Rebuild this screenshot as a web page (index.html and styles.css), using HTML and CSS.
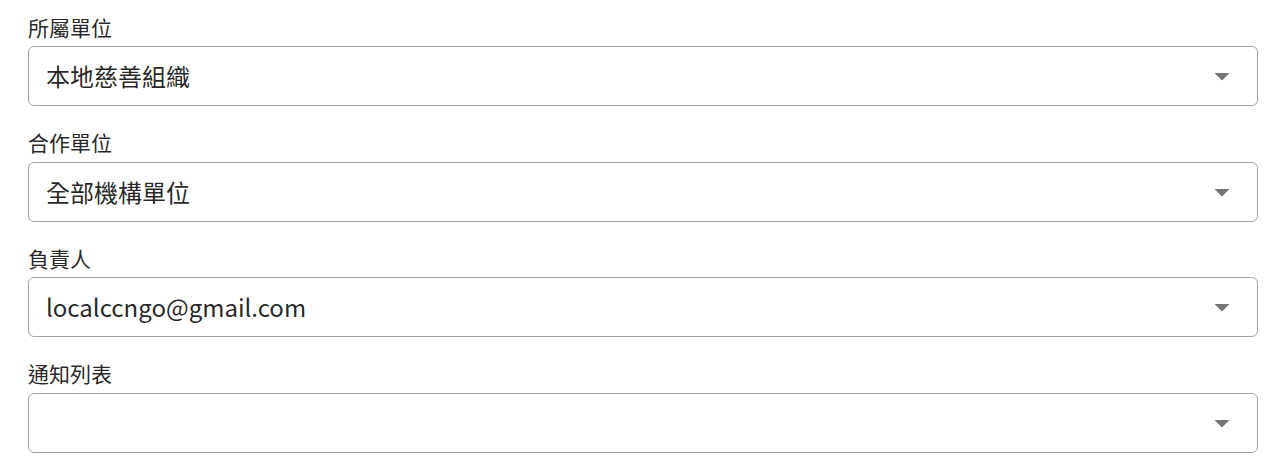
FILE: index.html
```html
<!DOCTYPE html>
<html lang="zh-Hant">
<head>
  <meta charset="UTF-8" />
  <meta name="viewport" content="width=device-width, initial-scale=1.0"/>
  <title>單位設定</title>
  <link rel="stylesheet" href="styles.css">
</head>
<body>

  <div class="form">

    <!-- 所屬單位 -->
    <div class="field">
      <label class="field-label">所屬單位</label>
      <div class="select">
        <span class="select-value">本地慈善組織</span>
        <svg class="select-arrow" viewBox="0 0 24 24"><path d="M7 10l5 5 5-5z"/></svg>
      </div>
    </div>

    <!-- 合作單位 -->
    <div class="field">
      <label class="field-label">合作單位</label>
      <div class="select">
        <span class="select-value">全部機構單位</span>
        <svg class="select-arrow" viewBox="0 0 24 24"><path d="M7 10l5 5 5-5z"/></svg>
      </div>
    </div>

    <!-- 負責人 -->
    <div class="field">
      <label class="field-label">負責人</label>
      <div class="select">
        <span class="select-value">localccngo@gmail.com</span>
        <svg class="select-arrow" viewBox="0 0 24 24"><path d="M7 10l5 5 5-5z"/></svg>
      </div>
    </div>

    <!-- 通知列表 -->
    <div class="field">
      <label class="field-label">通知列表</label>
      <div class="select">
        <span class="select-value"></span>
        <svg class="select-arrow" viewBox="0 0 24 24"><path d="M7 10l5 5 5-5z"/></svg>
      </div>
    </div>

  </div>

</body>
</html>
```

FILE: styles.css
```css
body, html {
  margin: 0;
  background: white;
  font-family: "Noto Sans CJK TC", "Noto Sans", sans-serif;
  color: rgba(0, 0, 0, 0.87);
}

.form {
  display: flex;
  flex-direction: column;
  gap: 24px;
  padding: 14.5px 19px 0 28px;
}

.field {
  display: flex;
  flex-direction: column;
}

.field-label {
  font-size: 21px;
  line-height: 25.5px;
  margin-bottom: 6px;
}

/* Outlined select box */
.select {
  box-sizing: border-box;
  height: 60px;
  border: 1px solid #a3a3a3;
  border-radius: 6px;
  display: flex;
  align-items: center;
  padding: 0 17px;
}

.select-value {
  flex: 1;
  font-size: 24px;
  line-height: 36px;
}

.select-arrow {
  width: 36px;
  height: 36px;
  fill: #757575;
}
```
